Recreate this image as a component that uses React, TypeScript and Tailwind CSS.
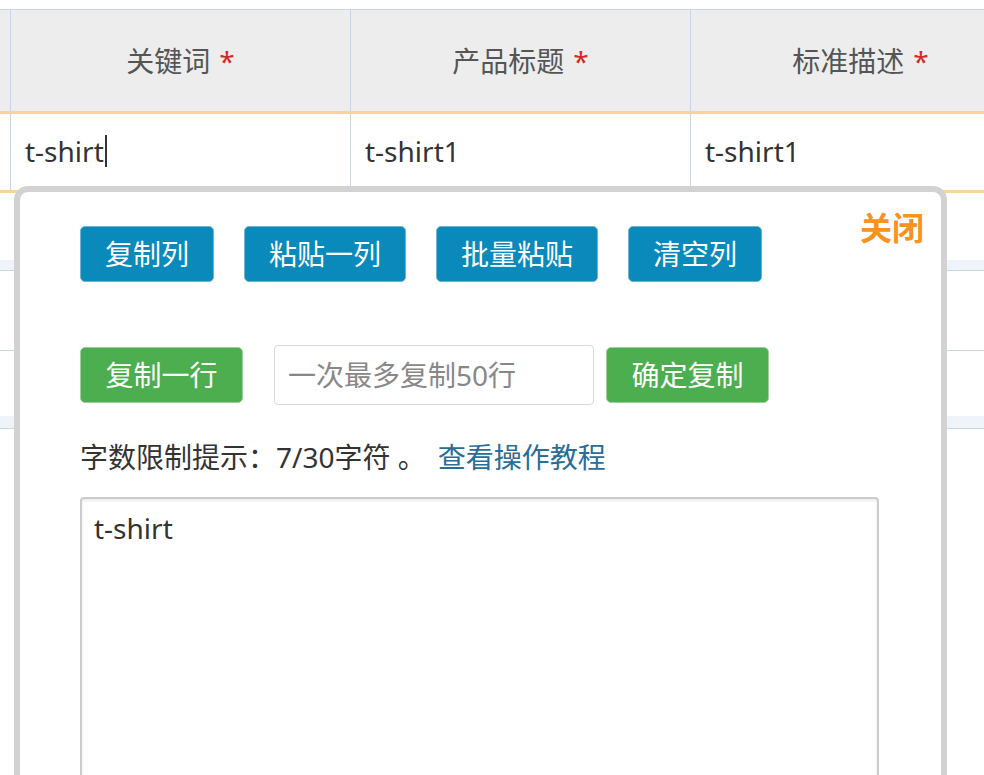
const headers = ["关键词", "产品标题", "标准描述"];
const values = ["t-shirt", "t-shirt1", "t-shirt1"];

const topButtons = [
  { label: "复制列", w: "w-[134px]" },
  { label: "粘贴一列", w: "w-[162px]" },
  { label: "批量粘贴", w: "w-[162px]" },
  { label: "清空列", w: "w-[134px]" },
];

const App = () => {
  return (
    <div className="relative w-[984px] h-[775px] overflow-hidden bg-white font-['Noto_Sans','Noto_Sans_CJK_SC',sans-serif] text-[#333]">
      {/* table behind the popup */}
      <div className="pt-[9px]">
        <div className="flex h-[105px] bg-[#ededed] border-t border-[#c9d5e6] border-b-[3px] border-b-[#f8d49c]">
          <div className="w-[11px] shrink-0 border-r border-[#c9d5e6]" />
          {headers.map((h) => (
            <div
              key={h}
              className="w-[340px] shrink-0 flex items-center justify-center border-r border-[#c9d5e6] text-[28px] text-[#555]"
            >
              {h}
              <span className="ml-[9px] text-[#d12a2a]">*</span>
            </div>
          ))}
        </div>
        <div className="flex h-[79px] border-b-[3px] border-[#f8d49c]">
          <div className="w-[11px] shrink-0 border-r border-[#c9d5e6]" />
          {values.map((v, i) => (
            <div
              key={i}
              className="w-[340px] shrink-0 flex items-center pl-[14px] pb-[3px] border-r border-[#c9d5e6] text-[28px] text-[#333]"
            >
              {v}
              {i === 0 && <span className="w-[2px] h-[32px] bg-[#333] ml-[1px]" />}
            </div>
          ))}
        </div>
        <div className="h-[78px] flex flex-col border-b border-[#c9d5e6]">
          <div className="flex-1" />
          <div className="h-[10px] bg-[#eef4fa]" />
        </div>
        <div className="h-[80px] border-b border-[#c9d5e6]" />
        <div className="h-[78px] flex flex-col border-b border-[#c9d5e6]">
          <div className="flex-1" />
          <div className="h-[12px] bg-[#eef4fa]" />
        </div>
      </div>

      {/* copy popup */}
      <div className="absolute left-[14px] top-[186px] w-[933px] h-[620px] bg-white border-[6px] border-[#d2d2d2] rounded-[14px] pl-[60px] pt-[34px]">
        <button className="absolute right-[17px] top-[20px] text-[32px] font-bold text-[#f7931e] leading-none">
          关闭
        </button>

        <div className="flex gap-[30px]">
          {topButtons.map((b) => (
            <button
              key={b.label}
              className={`${b.w} h-[56px] flex items-center justify-center rounded-[5px] bg-[#0a89bb] border border-[#6fb3d3] text-white text-[28px]`}
            >
              {b.label}
            </button>
          ))}
        </div>

        <div className="flex items-center mt-[63px]">
          <button className="w-[163px] h-[56px] flex items-center justify-center rounded-[5px] bg-[#4cae4f] border border-[#9fcfa0] text-white text-[28px]">
            复制一行
          </button>
          <input
            readOnly
            placeholder="一次最多复制50行"
            className="ml-[31px] w-[320px] h-[60px] rounded-[4px] border border-[#d9d9d9] px-[13px] text-[28px] placeholder:text-[#888] outline-none"
          />
          <button className="ml-[12px] w-[163px] h-[56px] flex items-center justify-center rounded-[5px] bg-[#4cae4f] border border-[#9fcfa0] text-white text-[28px]">
            确定复制
          </button>
        </div>

        <div className="mt-[33px] h-[38px] flex items-center text-[28px] text-[#333]">
          <span>字数限制提示：7/30字符 。</span>
          <a className="ml-[12px] text-[#2a6d96] cursor-pointer">查看操作教程</a>
        </div>

        <textarea
          readOnly
          value="t-shirt"
          className="mt-[21px] block w-[799px] h-[320px] resize-none rounded-[4px] border-2 border-[#cccccc] shadow-[inset_0_2px_3px_rgba(0,0,0,0.08)] px-[12px] pt-[10px] text-[28px] leading-[38px] text-[#333] outline-none"
        />
      </div>
    </div>
  );
};

export default App;
